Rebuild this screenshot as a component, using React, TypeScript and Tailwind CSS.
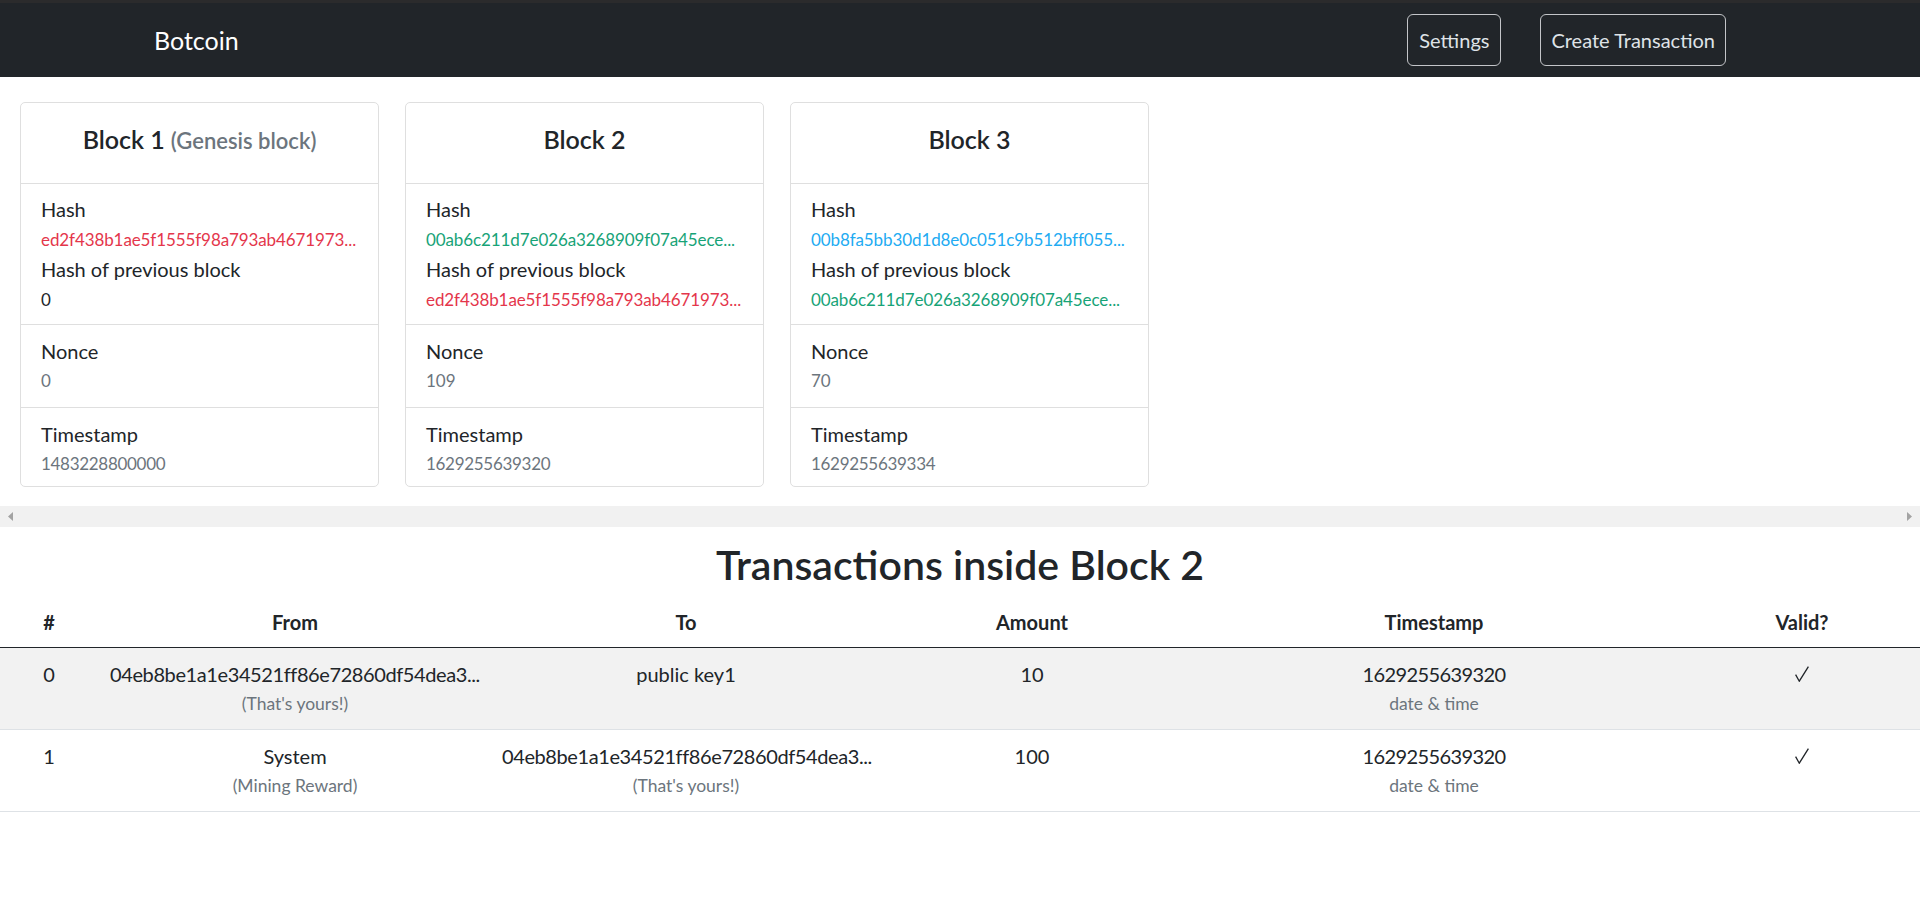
import React from 'react';

const hashColors: Record<string, string> = {
  'ed2f438b1ae5f1555f98a793ab4671973...': 'text-[#e4364b]',
  '00ab6c211d7e026a3268909f07a45ece...': 'text-[#17a377]',
  '00b8fa5bb30d1d8e0c051c9b512bff055...': 'text-[#22abf2]',
};

const blocks = [
  {
    title: 'Block 1',
    note: '(Genesis block)',
    hash: 'ed2f438b1ae5f1555f98a793ab4671973...',
    prev: '0',
    nonce: '0',
    timestamp: '1483228800000',
  },
  {
    title: 'Block 2',
    hash: '00ab6c211d7e026a3268909f07a45ece...',
    prev: 'ed2f438b1ae5f1555f98a793ab4671973...',
    nonce: '109',
    timestamp: '1629255639320',
  },
  {
    title: 'Block 3',
    hash: '00b8fa5bb30d1d8e0c051c9b512bff055...',
    prev: '00ab6c211d7e026a3268909f07a45ece...',
    nonce: '70',
    timestamp: '1629255639334',
  },
];

const transactions = [
  {
    from: '04eb8be1a1e34521ff86e72860df54dea3...',
    fromNote: "(That's yours!)",
    to: 'public key1',
    toNote: '',
    amount: '10',
    timestamp: '1629255639320',
  },
  {
    from: 'System',
    fromNote: '(Mining Reward)',
    to: '04eb8be1a1e34521ff86e72860df54dea3...',
    toNote: "(That's yours!)",
    amount: '100',
    timestamp: '1629255639320',
  },
];

type Block = (typeof blocks)[number];

// hex strings in the reference font run a bit narrower than Lato
const isHex = (s: string) => s.endsWith('...');

function HashValue({ value }: { value: string }) {
  const color = hashColors[value] ?? 'text-[#212529]';
  return (
    <div className={`h-[30px] pt-[1px] text-[17px] leading-[30px] tracking-[-0.1px] whitespace-nowrap ${color}`}>
      {value}
    </div>
  );
}

function BlockCard({ block }: { block: Block }) {
  return (
    <div className="w-[359px] shrink-0 rounded-[5px] border border-[#dfdfdf] bg-white">
      <div className="h-[81px] border-b border-[#dfdfdf] pt-[21px] text-center">
        <h4 className="flex h-[30px] items-baseline justify-center gap-[6px] text-[25px] leading-[30px] font-semibold">
          <span>{block.title}</span>
          {block.note && <small className="text-[22px] font-semibold text-[#6c757d]">{block.note}</small>}
        </h4>
      </div>
      <div className="border-b border-[#dfdfdf] px-[20px] py-[10px]">
        <div>Hash</div>
        <HashValue value={block.hash} />
        <div>Hash of previous block</div>
        <HashValue value={block.prev} />
      </div>
      <div className="border-b border-[#dfdfdf] px-[20px] pt-[11px] pb-[11px]">
        <div>Nonce</div>
        <div className="text-[17px] text-[#6c757d]">{block.nonce}</div>
      </div>
      <div className="px-[20px] pt-[11px] pb-[7px]">
        <div>Timestamp</div>
        <div className="text-[17px] tracking-[-0.3px] text-[#6c757d]">{block.timestamp}</div>
      </div>
    </div>
  );
}

function FakeScrollbar() {
  return (
    <div className="flex h-[21px] items-center justify-between bg-[#f1f1f1] pl-[8px] pr-[8px]">
      <svg width="5" height="9" viewBox="0 0 5 9">
        <path d="M5 0 L0 4.5 L5 9 Z" fill="#a3a3a3" />
      </svg>
      <svg width="5" height="9" viewBox="0 0 5 9">
        <path d="M0 0 L5 4.5 L0 9 Z" fill="#a3a3a3" />
      </svg>
    </div>
  );
}

function Check() {
  return (
    <div className="flex h-[30px] items-center justify-center">
      <svg width="14" height="16" viewBox="0 0 14 16" fill="none">
        <path d="M0.6 8.6 L4.3 15.2 L13.4 0.6" stroke="#212529" strokeWidth="1.3" strokeLinejoin="miter" />
      </svg>
    </div>
  );
}

function Party({ value, note }: { value: string; note: string }) {
  return (
    <>
      <div className={`whitespace-nowrap ${isHex(value) ? 'tracking-[-0.4px]' : ''}`}>{value}</div>
      <div className="h-[30px] text-[17.5px] text-[#6c757d]">{note}</div>
    </>
  );
}

export default function App() {
  return (
    <div className="min-h-screen bg-white font-['Lato',sans-serif] text-[20px] leading-[30px] text-[#212529]">
      <nav className="flex h-[77px] items-center justify-between border-t-[3px] border-[#2b2b2c] bg-[#212529] pl-[154px] pr-[194px]">
        <span className="text-[25px] leading-[30px] text-white">Botcoin</span>
        <div className="flex items-center gap-[39px]">
          <button className="rounded-[6px] border border-[#c3c5c8] px-[11px] py-[10px] text-[20px] leading-[30px] text-[#dfe3e7]">
            Settings
          </button>
          <button className="rounded-[6px] border border-[#c3c5c8] px-[10px] py-[10px] text-[20px] leading-[30px] text-[#dfe3e7]">
            Create Transaction
          </button>
        </div>
      </nav>

      <div className="flex gap-[26px] pl-[20px] pt-[25px] pb-[19px]">
        {blocks.map((block) => (
          <BlockCard key={block.title} block={block} />
        ))}
      </div>
      <FakeScrollbar />

      <h2 className="mt-[14px] mb-[8px] text-center text-[41px] leading-[48px] font-semibold">
        Transactions inside Block 2
      </h2>

      <table className="w-full table-fixed border-collapse text-center">
        <colgroup>
          <col className="w-[98px]" />
          <col className="w-[394px]" />
          <col className="w-[388px]" />
          <col className="w-[304px]" />
          <col className="w-[500px]" />
          <col className="w-[236px]" />
        </colgroup>
        <thead>
          <tr className="border-b-[1.5px] border-[#212529]">
            {['#', 'From', 'To', 'Amount', 'Timestamp', 'Valid?'].map((h) => (
              <th key={h} className="px-[10px] py-[10px] font-bold">
                {h}
              </th>
            ))}
          </tr>
        </thead>
        <tbody>
          {transactions.map((tx, i) => (
            <tr key={i} className={`border-b border-[#dee2e6] align-top ${i % 2 === 0 ? 'bg-[#f2f2f2]' : 'bg-white'}`}>
              <td className="px-[10px] pt-[11px] pb-[10px]">{i}</td>
              <td className="px-[10px] pt-[11px] pb-[10px]">
                <Party value={tx.from} note={tx.fromNote} />
              </td>
              <td className="px-[10px] pt-[11px] pb-[10px]">
                <Party value={tx.to} note={tx.toNote} />
              </td>
              <td className="px-[10px] pt-[11px] pb-[10px]">{tx.amount}</td>
              <td className="px-[10px] pt-[11px] pb-[10px]">
                <div className="tracking-[-0.6px]">{tx.timestamp}</div>
                <div className="text-[17.5px] text-[#6c757d]">date &amp; time</div>
              </td>
              <td className="px-[10px] pt-[11px] pb-[10px]">
                <Check />
              </td>
            </tr>
          ))}
        </tbody>
      </table>
    </div>
  );
}
